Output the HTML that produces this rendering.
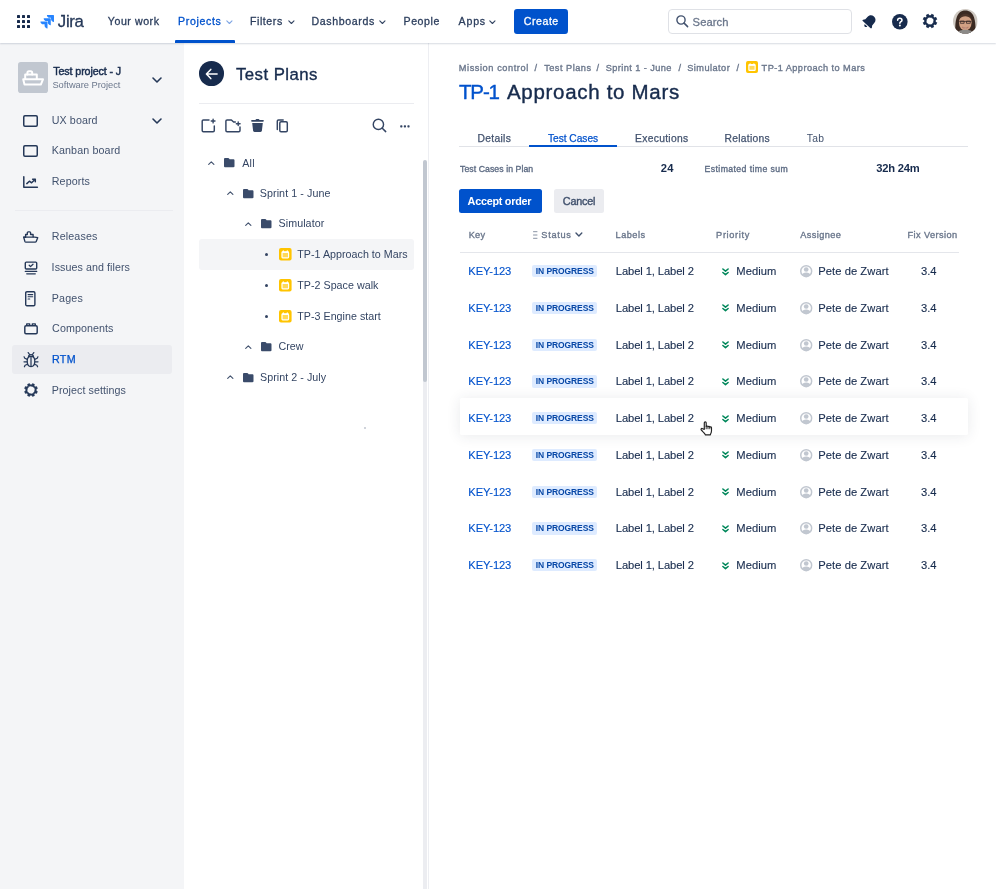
<!DOCTYPE html>
<html lang="en">
<head>
<meta charset="utf-8">
<title>TP-1 Approach to Mars</title>
<style>
*{box-sizing:border-box;margin:0;padding:0}
html,body{width:999px;height:889px;overflow:hidden;background:#fff}
body{font-family:"Liberation Sans",sans-serif;color:#172B4D;position:relative;-webkit-font-smoothing:antialiased}
.a{position:absolute;white-space:nowrap;line-height:1}
svg{position:absolute;overflow:visible}
/* nav */
#nav{left:0;top:0;width:996px;height:43px;background:#fff;box-shadow:0 1px 1.5px rgba(9,30,66,.16);clip-path:inset(0 0 -6px 0);z-index:5}
.m{-webkit-text-stroke:.4px currentColor}
.nv{font-size:10.6px;color:#2C3E5D;top:16.2px;-webkit-text-stroke:.3px currentColor}
/* sidebar */
#side{left:0;top:43px;width:184px;height:846px;background:#F4F5F7}
.sl{font-size:10.7px;color:#42526E;left:52.5px}
/* middle */
.tr{font-size:10.7px;color:#344563}
/* main */
.bc{font-size:9.2px;color:#6B778C;top:63.5px;-webkit-text-stroke:.35px currentColor}
.tab{font-size:10.3px;color:#42526E;top:134.2px;-webkit-text-stroke:.25px currentColor}
.th{font-size:9.2px;color:#6B778C;top:230px;transform:translateY(.6px);-webkit-text-stroke:.35px currentColor}
.row{left:459.5px;width:508.5px;height:37px}
.row .a{top:13px;font-size:11.2px;color:#172B4D;-webkit-text-stroke:.12px currentColor}
.row .key{left:8.8px;color:#0052CC;letter-spacing:-.12px}
.row .loz{left:72.700px;top:12.1px;width:65px;height:12.3px;background:#DEEBFF;border-radius:2px;color:#0747A6;font-size:8.5px;font-weight:bold;-webkit-text-stroke:0;text-align:center;line-height:12.6px;letter-spacing:-.1px;padding-left:.3px}
.row .lab{left:156.3px;letter-spacing:-.1px}
.row .med{left:276.8px;letter-spacing:.05px}
.row .asg{left:358.8px;letter-spacing:.05px}
.row .fix{left:461.5px}
.row svg.pri{left:262.400px;top:14.600px}
.row svg.av{left:340.200px;top:12px}
.hov{left:459.600px;top:398.300px;width:508.600px;height:36.400px;background:#fff;box-shadow:0 1px 14px rgba(40,50,70,.10);border-radius:1.5px}
</style>
</head>
<body>
<div id="wrap" style="position:absolute;left:0;top:0;width:999px;height:889px;will-change:transform">

<!-- ================= NAV ================= -->
<div id="nav" class="a">
  <svg style="left:16.5px;top:15px" width="13" height="13" viewBox="0 0 13 13" fill="#172B4D">
    <rect x="0" y="0" width="3" height="3" rx=".6"/><rect x="5" y="0" width="3" height="3" rx=".6"/><rect x="10" y="0" width="3" height="3" rx=".6"/>
    <rect x="0" y="5" width="3" height="3" rx=".6"/><rect x="5" y="5" width="3" height="3" rx=".6"/><rect x="10" y="5" width="3" height="3" rx=".6"/>
    <rect x="0" y="10" width="3" height="3" rx=".6"/><rect x="5" y="10" width="3" height="3" rx=".6"/><rect x="10" y="10" width="3" height="3" rx=".6"/>
  </svg>
  <svg style="left:40px;top:14px" width="14.5" height="14.5" viewBox="0 0 32 32">
    <path fill="#2684FF" d="M29.6 2H15.2c0 3.6 2.900 6.500 6.500 6.500h2.650v2.550c0 3.600 2.900 6.500 6.500 6.500V3.250C30.850 2.560 30.290 2 29.600 2z"/>
    <path fill="#2684FF" d="M22.480 9.170H8.080c0 3.600 2.900 6.500 6.500 6.500h2.650v2.560c0 3.600 2.910 6.500 6.500 6.500V10.420c0-.690-.560-1.250-1.250-1.250z"/>
    <path fill="#2684FF" d="M15.350 16.340H.95c0 3.600 2.910 6.510 6.500 6.510h2.660v2.550c0 3.590 2.900 6.500 6.490 6.500V17.590c0-.690-.560-1.250-1.250-1.250z"/>
  </svg>
  <div class="a" style="left:57.8px;top:13.5px;font-size:16.8px;color:#253858;-webkit-text-stroke:.3px currentColor;letter-spacing:-0.31px">Jira</div>

  <div class="a nv" style="left:107.8px;;letter-spacing:0.56px">Your work</div>
  <div class="a nv" style="left:178.0px;color:#0052CC;letter-spacing:0.66px">Projects</div>
  <div class="a nv" style="left:250.0px;;letter-spacing:0.56px">Filters</div>
  <div class="a nv" style="left:311.5px;;letter-spacing:0.62px">Dashboards</div>
  <div class="a nv" style="left:403.5px;;letter-spacing:0.56px">People</div>
  <div class="a nv" style="left:458.5px;;letter-spacing:0.84px">Apps</div>
  <svg style="left:225.6px;top:19.8px" width="6.8" height="4.4" viewBox="0 0 6.8 4.4"><path d="M.8.9l2.600 2.600L6 .9" fill="none" stroke="#7FA6E4" stroke-width="1.1" stroke-linecap="round" stroke-linejoin="round"/></svg>
  <svg style="left:287.6px;top:19.8px" width="6.8" height="4.4" viewBox="0 0 6.8 4.4"><path d="M.8.9l2.600 2.600L6 .9" fill="none" stroke="#344563" stroke-width="1.1" stroke-linecap="round" stroke-linejoin="round"/></svg>
  <svg style="left:378.6px;top:19.8px" width="6.8" height="4.4" viewBox="0 0 6.8 4.4"><path d="M.8.9l2.600 2.600L6 .9" fill="none" stroke="#344563" stroke-width="1.1" stroke-linecap="round" stroke-linejoin="round"/></svg>
  <svg style="left:489.1px;top:19.8px" width="6.8" height="4.4" viewBox="0 0 6.8 4.4"><path d="M.8.9l2.600 2.600L6 .9" fill="none" stroke="#344563" stroke-width="1.1" stroke-linecap="round" stroke-linejoin="round"/></svg>
  <div class="a" style="left:175.300px;top:40.300px;width:59.700px;height:2.700px;background:#0052CC;border-radius:1px 1px 0 0"></div>

  <div class="a" style="left:514px;top:9px;width:53.500px;height:25px;background:#0052CC;border-radius:3px"></div>
  <div class="a nv" style="left:523.8px;color:#fff;letter-spacing:0.53px">Create</div>

  <div class="a" style="left:668px;top:9px;width:184px;height:25px;border:1.5px solid #DFE1E6;border-radius:4px;background:#fff"></div>
  <svg style="left:676px;top:15.300px" width="12.500" height="12.500" viewBox="0 0 12.500 12.500"><circle cx="5" cy="5" r="4.100" fill="none" stroke="#42526E" stroke-width="1.400"/><path d="M8.100 8.100l3.500 3.500" stroke="#42526E" stroke-width="1.500" stroke-linecap="round"/></svg>
  <div class="a" style="left:692.6px;top:17.2px;font-size:11.200px;color:#6B778C;-webkit-text-stroke:.3px currentColor;letter-spacing:0.07px">Search</div>

  <!-- bell -->
  <svg style="left:861.500px;top:13.800px" width="15" height="15" viewBox="0 0 16 16"><g transform="rotate(42 8 8)" fill="#172B4D"><path d="M8 .9c-2.900 0-4.900 2.100-4.900 5v3.300L1.700 11.200c-.4.600 0 1.300.7 1.300h11.200c.7 0 1.100-.7.700-1.300l-1.400-2V5.900c0-2.900-2-5-4.900-5z"/><path d="M6.200 13.500h3.600c0 1.100-.8 1.900-1.800 1.900s-1.800-.8-1.800-1.900z"/></g></svg>
  <!-- help -->
  <svg style="left:891.600px;top:13.600px" width="15.600" height="15.600" viewBox="0 0 18 18"><circle cx="9" cy="9" r="9" fill="#172B4D"/><path d="M6.500 7.300c0-1.500 1.100-2.500 2.500-2.500s2.500.9 2.500 2.300c0 1.800-2.400 1.800-2.400 3.600" fill="none" stroke="#fff" stroke-width="1.800" stroke-linecap="round"/><circle cx="9.100" cy="13.300" r="1.150" fill="#fff"/></svg>
  <!-- gear -->
  <svg style="left:921.800px;top:13.400px" width="16" height="16" viewBox="0 0 16 16"><path fill="#172B4D" fill-rule="evenodd" stroke="#172B4D" stroke-width=".6" stroke-linejoin="round" d="M13.35 6.72 L14.91 6.90 L14.91 9.10 L13.35 9.28 L12.69 10.87 L13.66 12.11 L12.11 13.66 L10.87 12.69 L9.28 13.35 L9.10 14.91 L6.90 14.91 L6.72 13.35 L5.13 12.69 L3.89 13.66 L2.34 12.11 L3.31 10.87 L2.65 9.28 L1.09 9.10 L1.09 6.90 L2.65 6.72 L3.31 5.13 L2.34 3.89 L3.89 2.34 L5.13 3.31 L6.72 2.65 L6.90 1.09 L9.10 1.09 L9.28 2.65 L10.87 3.31 L12.11 2.34 L13.66 3.89 L12.69 5.13Z M11.70 8.00 A3.7 3.7 0 1 0 4.30 8.00 A3.7 3.7 0 1 0 11.70 8.00Z" transform="rotate(22.5 8 8)"/></svg>
  <!-- avatar -->
  <svg style="left:952.900px;top:9px" width="24.600" height="24.600" viewBox="0 0 24.600 24.600"><defs><clipPath id="avc"><circle cx="12.300" cy="12.300" r="12.300"/></clipPath></defs><g clip-path="url(#avc)"><rect width="24.600" height="24.600" fill="#CFC9C2"/><path d="M2.500 25C1.500 12 3.500 1.500 12.300 1.500S23 11 22.500 25z" fill="#3B2A22"/><ellipse cx="12.300" cy="13.600" rx="6.300" ry="8" fill="#D2A184"/><path d="M5.800 10.500c1-4.500 4-5.800 6.500-5.800s5.600 1.400 6.500 5.800c-2-2.600-4.500-3.300-6.500-3.300s-4.500.7-6.500 3.300z" fill="#4A3328"/><path d="M6.300 12.400h12M7.300 12.100h3.800v2.200H7.300zM13.500 12.100h3.800v2.200h-3.800z" fill="none" stroke="#3A2C2A" stroke-width=".8"/><path d="M9.300 18.300c1.800 1.500 4.200 1.500 6 0-1.800.5-4.200.5-6 0z" fill="#fff" stroke="#A0604C" stroke-width=".5"/><path d="M4 25c1-3.500 4.500-4.200 8.300-4.200s7.300.7 8.300 4.200z" fill="#8C8A88"/></g></svg>
</div>

<!-- ================= SIDEBAR ================= -->
<div id="side" class="a"></div>
<div id="sidec">
  <!-- project header -->
  <div class="a" style="left:17.800px;top:62.100px;width:30.200px;height:30.800px;border-radius:2.800px;background:#C1C7D0"></div>
  <svg style="left:18px;top:62px" width="30" height="31" viewBox="0 0 30 31" fill="none" stroke="#fff" stroke-width="2" stroke-linejoin="round" stroke-linecap="round">
    <path d="M5.200 17.300h19.800l-2.200 5.300H6.500z"/><path d="M7.200 17V12.600h11.600V17"/><path d="M9.400 12.400v-1.600c0-.9.600-1.500 1.500-1.500h1.800c.9 0 1.500.6 1.500 1.500v1.600"/>
  </svg>
  <div class="a" style="left:53.3px;top:66px;font-size:10.7px;color:#172B4D;-webkit-text-stroke:.45px currentColor;letter-spacing:-0.11px">Test project - J</div>
  <div class="a" style="left:52.4px;top:80.500px;font-size:9.300px;color:#6B778C;letter-spacing:-0.01px">Software Project</div>
  <svg style="left:151.500px;top:76.500px" width="10" height="6" viewBox="0 0 10 6"><path d="M1 1l4 4 4-4" fill="none" stroke="#253858" stroke-width="1.600" stroke-linecap="round" stroke-linejoin="round"/></svg>

  <!-- UX board -->
  <svg style="left:23px;top:114.500px" width="15" height="12" viewBox="0 0 15 12"><rect x=".75" y=".75" width="13.500" height="10.500" rx="1.200" fill="none" stroke="#253858" stroke-width="1.500"/></svg>
  <div class="a sl" style="left:51.8px;top:114.500px;letter-spacing:0.08px">UX board</div>
  <svg style="left:151.500px;top:117.500px" width="10" height="6" viewBox="0 0 10 6"><path d="M1 1l4 4 4-4" fill="none" stroke="#253858" stroke-width="1.600" stroke-linecap="round" stroke-linejoin="round"/></svg>
  <!-- Kanban -->
  <svg style="left:23px;top:145px" width="15" height="12" viewBox="0 0 15 12"><rect x=".75" y=".75" width="13.500" height="10.500" rx="1.200" fill="none" stroke="#253858" stroke-width="1.500"/></svg>
  <div class="a sl" style="left:51.7px;top:145px;letter-spacing:0.13px">Kanban board</div>
  <!-- Reports -->
  <svg style="left:23px;top:175.500px" width="15" height="12" viewBox="0 0 15 12" fill="none" stroke="#253858" stroke-width="1.500" stroke-linecap="round" stroke-linejoin="round"><path d="M.8.800v10.400h13.600"/><path d="M3.800 7.600l2.600-2.400 2.200 1.600 3.400-3.300"/><path d="M9.600 3.200h2.700v2.600"/></svg>
  <div class="a sl" style="left:51.8px;top:175.500px;letter-spacing:0.1px">Reports</div>

  <div class="a" style="left:15px;top:209.500px;width:158px;height:1.500px;background:#EBECF0"></div>

  <!-- Releases -->
  <svg style="left:23px;top:231px" width="16" height="12" viewBox="0 0 16 12" fill="none" stroke="#253858" stroke-width="1.350" stroke-linejoin="round" stroke-linecap="round"><path d="M.7 6.200h1.900V3.500h1.700V1.800c0-.6.300-.9.900-.9h1.500c.6 0 .9.300.9.900v1.700h2.500v2.300l4.600.9-1.500 3.700c-.2.500-.5.700-1 .7H2.900c-.5 0-.8-.2-1-.7z"/><path d="M.7 6.200h9.600" stroke-width="1.200"/></svg>
  <div class="a sl" style="left:51.8px;top:231px;letter-spacing:0.14px">Releases</div>
  <!-- Issues -->
  <svg style="left:23.500px;top:260.500px" width="14" height="14" viewBox="0 0 14 14" fill="none" stroke="#253858" stroke-width="1.400" stroke-linecap="round" stroke-linejoin="round"><rect x="1.300" y="1.100" width="11.400" height="6.900" rx="1"/><path d="M5.200 4.300l1.300 1.300 2.500-2.400" stroke-width="1.300"/><path d="M1.300 10.400h11.400M2.700 12.800h8.600" stroke-width="1.250"/></svg>
  <div class="a sl" style="left:51.6px;top:262px;letter-spacing:0.07px">Issues and filers</div>
  <!-- Pages -->
  <svg style="left:25.300px;top:290.600px" width="10.600" height="15.400" viewBox="0 0 10.600 15.400" fill="none" stroke="#253858" stroke-width="1.400" stroke-linecap="round" stroke-linejoin="round"><rect x=".7" y=".7" width="9.200" height="14" rx="1.200"/><path d="M3.100 3.600h4.600M3.100 5.800h4.600M3.100 8h1.600" stroke-width="1.150"/></svg>
  <div class="a sl" style="left:51.8px;top:292.500px;letter-spacing:0.18px">Pages</div>
  <!-- Components -->
  <svg style="left:23.500px;top:323.300px" width="14" height="11.600" viewBox="0 0 14 11.600" fill="none" stroke="#253858" stroke-width="1.450" stroke-linejoin="round"><rect x=".8" y="2.700" width="12.400" height="8.100" rx="1.200"/><path d="M2.700 2.500V.9h3v1.600M8.300 2.500V.9h3v1.600" stroke-width="1.350"/></svg>
  <div class="a sl" style="left:52.1px;top:323px;letter-spacing:0.08px">Components</div>
  <!-- RTM -->
  <div class="a" style="left:12.300px;top:345px;width:159.300px;height:29px;border-radius:3px;background:#EBECF0"></div>
  <svg style="left:23px;top:351.500px" width="16" height="16" viewBox="0 0 16 16" fill="none" stroke="#253858" stroke-width="1.250" stroke-linecap="round" stroke-linejoin="round"><path d="M8 4.400c2.400 0 3.800 1.700 3.800 4.800s-1.400 5.300-3.800 5.300-3.800-2.200-3.800-5.300S5.600 4.400 8 4.400z"/><path d="M5.500 4.700C5.600 3.300 6.600 2.500 8 2.500s2.400.8 2.500 2.200"/><path d="M8 4.800v9.400"/><path d="M6.600 2.500L5.200.6M9.400 2.500L10.800.6"/><path d="M4.300 7.400L1.800 6.200l-.7-1.400M4.100 9.800H1M4.500 12.200l-2.400 1.100-.7 1.500M11.700 7.400l2.500-1.200.7-1.400M11.900 9.800H15M11.500 12.200l2.400 1.100.7 1.500"/></svg>
  <div class="a sl" style="left:52px;top:354px;color:#0052CC;-webkit-text-stroke:.25px currentColor;letter-spacing:0.3px">RTM</div>
  <!-- Settings -->
  <svg style="left:22.500px;top:382px" width="16" height="16" viewBox="0 0 16 16"><path fill="#253858" fill-rule="evenodd" stroke="#253858" stroke-width=".5" stroke-linejoin="round" d="M13.15 6.76 L14.52 6.97 L14.52 9.03 L13.15 9.24 L12.52 10.77 L13.34 11.88 L11.88 13.34 L10.77 12.52 L9.24 13.15 L9.03 14.52 L6.97 14.52 L6.76 13.15 L5.23 12.52 L4.12 13.34 L2.66 11.88 L3.48 10.77 L2.85 9.24 L1.48 9.03 L1.48 6.97 L2.85 6.76 L3.48 5.23 L2.66 4.12 L4.12 2.66 L5.23 3.48 L6.76 2.85 L6.97 1.48 L9.03 1.48 L9.24 2.85 L10.77 3.48 L11.88 2.66 L13.34 4.12 L12.52 5.23Z M11.80 8.00 A3.8 3.8 0 1 0 4.20 8.00 A3.8 3.8 0 1 0 11.80 8.00Z" transform="rotate(22.5 8 8)"/></svg>
  <div class="a sl" style="left:51.8px;top:384.500px;letter-spacing:0.06px">Project settings</div>
</div>

<!-- ================= MIDDLE ================= -->
<div id="mid">
  <div class="a" style="left:428px;top:43px;width:1.400px;height:846px;background:#EDEEF2"></div>
  <div class="a" style="left:422.900px;top:378px;width:4.400px;height:511px;background:#ECEDF1"></div>
  <div class="a" style="left:422.900px;top:160px;width:4.400px;height:221.700px;background:#C1C7D0;border-radius:2.200px"></div>
  <div class="a" style="left:199px;top:61.200px;width:24.600px;height:24.600px;border-radius:50%;background:#172B4D"></div>
  <svg style="left:205px;top:67.500px" width="13" height="12" viewBox="0 0 13 12"><path d="M5.800 1.400L1.400 6l4.400 4.600M1.800 6h10.300" fill="none" stroke="#fff" stroke-width="1.500" stroke-linecap="round" stroke-linejoin="round"/></svg>
  <div class="a" style="left:236px;top:67px;font-size:16.800px;color:#172B4D;-webkit-text-stroke:.35px #172B4D;letter-spacing:0.44px">Test Plans</div>
  <div class="a" style="left:199px;top:102.700px;width:214.500px;height:1.200px;background:#EBECF0"></div>
  <!-- toolbar -->
  <svg style="left:195px;top:110px" width="105" height="30" viewBox="195 110 105 30" fill="none" stroke="#344563" stroke-width="1.450" stroke-linecap="round" stroke-linejoin="round">
    <path d="M209 119.900h-5.600c-.7 0-1.200.5-1.200 1.200v9.400c0 .7.500 1.200 1.200 1.200h9.700c.7 0 1.200-.5 1.200-1.200V126"/><path d="M213.100 119.100v3.800M211.200 121h3.800" stroke-width="1.350"/>
    <path d="M235.300 122h-1.700l-2.200-2.100h-4.300c-.7 0-1.200.5-1.200 1.200v9.400c0 .7.500 1.200 1.200 1.200h11.700c.7 0 1.200-.5 1.200-1.200v-3.600"/><path d="M238.200 121.800v3.800M236.300 123.700h3.800" stroke-width="1.350"/>
    <path fill="#344563" stroke="none" d="M255.500 119.900c.1-.5.500-.8 1-.8h2c.5 0 .9.300 1 .8h3.500c.5 0 .9.400.9.900s-.4.900-.9.900h-11c-.5 0-.9-.4-.9-.9s.4-.9.900-.9zM252.200 123h10.600l-.9 7.700c-.1.700-.7 1.200-1.400 1.200h-6c-.7 0-1.300-.5-1.400-1.200z"/>
    <rect x="279.800" y="121.800" width="7.500" height="10" rx="1.200"/><path d="M277.300 129.600v-8.500c0-.7.500-1.200 1.200-1.200h4.700"/>
  </svg>
  <svg style="left:372.400px;top:118.200px" width="15.500" height="15.500" viewBox="0 0 15.500 15.500"><circle cx="6.400" cy="6.400" r="5.150" fill="none" stroke="#344563" stroke-width="1.450"/><path d="M10.300 10.300l3.400 3.300" stroke="#344563" stroke-width="1.500" stroke-linecap="round"/></svg>
  <svg style="left:399.600px;top:124.800px" width="10" height="2.600" viewBox="0 0 10 2.600" fill="#344563"><rect x=".2" y=".2" width="2.200" height="2.200" rx=".7"/><rect x="3.800" y=".2" width="2.200" height="2.200" rx=".7"/><rect x="7.400" y=".2" width="2.200" height="2.200" rx=".7"/></svg>
  <div class="a" style="left:199px;top:239.300px;width:215px;height:30.400px;border-radius:3px;background:#F4F5F7"></div>
  <svg style="left:208.1px;top:160.8px" width="6.600" height="4" viewBox="0 0 6.600 4"><path d="M.7 3.300L3.300.8l2.600 2.500" fill="none" stroke="#42526E" stroke-width="1.150" stroke-linecap="round" stroke-linejoin="round"/></svg><svg style="left:224.4px;top:158.1px" width="10.500" height="9.200" viewBox="0 0 10.500 9.200"><path fill="#3A4B6A" d="M.9 0h3.300c.4 0 .7.200.9.500l.5.800h4c.5 0 .9.400.9.900v6.100c0 .5-.4.900-.9.900H.9C.4 9.200 0 8.800 0 8.300V.9C0 .4.400 0 .9 0z"/></svg><div class="a tr" style="left:242.3px;top:158px;letter-spacing:0.19px">All</div>
  <svg style="left:226.6px;top:191.2px" width="6.600" height="4" viewBox="0 0 6.600 4"><path d="M.7 3.300L3.300.8l2.600 2.500" fill="none" stroke="#42526E" stroke-width="1.150" stroke-linecap="round" stroke-linejoin="round"/></svg><svg style="left:242.9px;top:188.5px" width="10.500" height="9.200" viewBox="0 0 10.500 9.200"><path fill="#3A4B6A" d="M.9 0h3.300c.4 0 .7.200.9.500l.5.800h4c.5 0 .9.400.9.900v6.100c0 .5-.4.900-.9.900H.9C.4 9.200 0 8.800 0 8.300V.9C0 .4.400 0 .9 0z"/></svg><div class="a tr" style="left:259.8px;top:188px;letter-spacing:0.08px">Sprint 1 - June</div>
  <svg style="left:244.9px;top:221.8px" width="6.600" height="4" viewBox="0 0 6.600 4"><path d="M.7 3.300L3.300.8l2.600 2.500" fill="none" stroke="#42526E" stroke-width="1.150" stroke-linecap="round" stroke-linejoin="round"/></svg><svg style="left:261.2px;top:219.1px" width="10.500" height="9.200" viewBox="0 0 10.500 9.200"><path fill="#3A4B6A" d="M.9 0h3.300c.4 0 .7.200.9.500l.5.800h4c.5 0 .9.400.9.900v6.100c0 .5-.4.900-.9.900H.9C.4 9.200 0 8.800 0 8.300V.9C0 .4.400 0 .9 0z"/></svg><div class="a tr" style="left:278.5px;top:218px;letter-spacing:0.08px">Simulator</div>
  <div class="a" style="left:265.0px;top:253.2px;width:3px;height:3px;border-radius:50%;background:#344563"></div><svg style="left:278.6px;top:248.3px" width="12.600" height="12.600" viewBox="0 0 12.600 12.600"><rect width="12.600" height="12.600" rx="2" fill="#FFC400"/><rect x="3" y="4.300" width="6.600" height="5.500" rx=".7" fill="#FFD95A" stroke="#fff" stroke-width="1.200"/><path d="M2.600 4.600V4c0-.5.300-.8.800-.8h5.800c.5 0 .8.300.8.800v.6z" fill="#fff"/><path d="M4.300 2.900v1M8.300 2.900v1" stroke="#fff" stroke-width="1.300" stroke-linecap="round"/></svg><div class="a tr" style="left:297.2px;top:249px;letter-spacing:0.03px">TP-1 Approach to Mars</div>
  <div class="a" style="left:265.0px;top:283.9px;width:3px;height:3px;border-radius:50%;background:#344563"></div><svg style="left:278.6px;top:279.0px" width="12.600" height="12.600" viewBox="0 0 12.600 12.600"><rect width="12.600" height="12.600" rx="2" fill="#FFC400"/><rect x="3" y="4.300" width="6.600" height="5.500" rx=".7" fill="#FFD95A" stroke="#fff" stroke-width="1.200"/><path d="M2.600 4.600V4c0-.5.300-.8.800-.8h5.800c.5 0 .8.300.8.800v.6z" fill="#fff"/><path d="M4.300 2.900v1M8.300 2.900v1" stroke="#fff" stroke-width="1.300" stroke-linecap="round"/></svg><div class="a tr" style="left:297.2px;top:280px;letter-spacing:0.03px">TP-2 Space walk</div>
  <div class="a" style="left:265.0px;top:314.7px;width:3px;height:3px;border-radius:50%;background:#344563"></div><svg style="left:278.6px;top:309.8px" width="12.600" height="12.600" viewBox="0 0 12.600 12.600"><rect width="12.600" height="12.600" rx="2" fill="#FFC400"/><rect x="3" y="4.300" width="6.600" height="5.500" rx=".7" fill="#FFD95A" stroke="#fff" stroke-width="1.200"/><path d="M2.600 4.600V4c0-.5.300-.8.800-.8h5.800c.5 0 .8.300.8.800v.6z" fill="#fff"/><path d="M4.300 2.900v1M8.300 2.900v1" stroke="#fff" stroke-width="1.300" stroke-linecap="round"/></svg><div class="a tr" style="left:297.2px;top:311px;letter-spacing:0.03px">TP-3 Engine start</div>
  <svg style="left:245.1px;top:344.6px" width="6.600" height="4" viewBox="0 0 6.600 4"><path d="M.7 3.300L3.300.8l2.600 2.500" fill="none" stroke="#42526E" stroke-width="1.150" stroke-linecap="round" stroke-linejoin="round"/></svg><svg style="left:261.4px;top:341.9px" width="10.500" height="9.200" viewBox="0 0 10.500 9.200"><path fill="#3A4B6A" d="M.9 0h3.300c.4 0 .7.200.9.500l.5.800h4c.5 0 .9.400.9.900v6.100c0 .5-.4.900-.9.900H.9C.4 9.200 0 8.800 0 8.300V.9C0 .4.400 0 .9 0z"/></svg><div class="a tr" style="left:278.4px;top:341px;letter-spacing:0.04px">Crew</div>
  <svg style="left:226.7px;top:375.2px" width="6.600" height="4" viewBox="0 0 6.600 4"><path d="M.7 3.300L3.300.8l2.600 2.500" fill="none" stroke="#42526E" stroke-width="1.150" stroke-linecap="round" stroke-linejoin="round"/></svg><svg style="left:243.0px;top:372.5px" width="10.500" height="9.200" viewBox="0 0 10.500 9.200"><path fill="#3A4B6A" d="M.9 0h3.300c.4 0 .7.200.9.500l.5.800h4c.5 0 .9.400.9.900v6.100c0 .5-.4.900-.9.900H.9C.4 9.200 0 8.800 0 8.300V.9C0 .4.400 0 .9 0z"/></svg><div class="a tr" style="left:260.0px;top:372px;letter-spacing:0.05px">Sprint 2 - July</div>
</div>

<!-- ================= MAIN ================= -->
<div id="main">
  <div class="a bc" style="left:458.8px;;letter-spacing:0.58px">Mission control</div><div class="a bc" style="left:534.500px">/</div>
  <div class="a bc" style="left:544.2px;;letter-spacing:0.49px">Test Plans</div><div class="a bc" style="left:596.500px">/</div>
  <div class="a bc" style="left:605.7px;;letter-spacing:0.43px">Sprint 1 - June</div><div class="a bc" style="left:678.500px">/</div>
  <div class="a bc" style="left:687.3px;;letter-spacing:0.45px">Simulator</div><div class="a bc" style="left:736.500px">/</div>
  <svg style="left:746px;top:61px" width="12" height="12" viewBox="0 0 12.600 12.600"><rect width="12.600" height="12.600" rx="2" fill="#FFC400"/><rect x="3" y="4.300" width="6.600" height="5.500" rx=".7" fill="#FFD95A" stroke="#fff" stroke-width="1.200"/><path d="M2.600 4.600V4c0-.5.300-.8.800-.8h5.800c.5 0 .8.300.8.800v.6z" fill="#fff"/><path d="M4.300 2.900v1M8.300 2.900v1" stroke="#fff" stroke-width="1.300" stroke-linecap="round"/></svg>
  <div class="a bc" style="left:761.6px;;letter-spacing:0.44px">TP-1 Approach to Mars</div>
  <div class="a m" style="left:459px;top:82px;font-size:20.500px;color:#0052CC;letter-spacing:-1.16px">TP-1</div>
  <div class="a m" style="left:507px;top:82px;font-size:20.500px;color:#172B4D;letter-spacing:0.69px">Approach to Mars</div>
  <!-- tabs -->
  <div class="a tab" style="left:477.5px;;letter-spacing:0.3px">Details</div>
  <div class="a tab" style="left:548px;top:133.7px;font-size:10.2px;color:#0052CC;letter-spacing:-0.03px">Test Cases</div>
  <div class="a tab" style="left:635.1px;;letter-spacing:0.3px">Executions</div>
  <div class="a tab" style="left:724.5px;;letter-spacing:0.29px">Relations</div>
  <div class="a tab" style="left:806.8px;-webkit-text-stroke:0;letter-spacing:0.23px">Tab</div>
  <div class="a" style="left:459px;top:145.900px;width:509px;height:1px;background:#E1E3E8"></div>
  <div class="a" style="left:529px;top:145.300px;width:87.600px;height:1.700px;background:#0052CC"></div>
  <!-- stats -->
  <div class="a" style="left:460.0px;top:165.2px;font-size:8.700px;-webkit-text-stroke:.35px currentColor;color:#5E6C84;letter-spacing:0.07px">Test Cases in Plan</div>
  <div class="a" style="left:660.8px;top:163px;font-size:11.200px;font-weight:bold;color:#172B4D;letter-spacing:0.11px">24</div>
  <div class="a" style="left:704.6px;top:165.2px;font-size:8.700px;-webkit-text-stroke:.35px currentColor;color:#5E6C84;letter-spacing:0.4px">Estimated time sum</div>
  <div class="a" style="left:876.2px;top:163px;font-size:11.200px;font-weight:bold;color:#172B4D;letter-spacing:-0.2px">32h 24m</div>
  <!-- buttons -->
  <div class="a" style="left:459px;top:188.800px;width:82.600px;height:24px;background:#0052CC;border-radius:2.500px"></div>
  <div class="a" style="left:467.6px;top:195.500px;font-size:10.800px;font-weight:bold;color:#fff;letter-spacing:-0.25px">Accept order</div>
  <div class="a" style="left:554px;top:188.800px;width:50.300px;height:24px;background:#EBECF0;border-radius:2.500px"></div>
  <div class="a" style="left:562.8px;top:195.500px;font-size:10.800px;color:#42526E;-webkit-text-stroke:.4px currentColor;letter-spacing:-0.21px">Cancel</div>
  <!-- table head -->
  <div class="a th" style="left:468.7px;;letter-spacing:0.23px">Key</div>
  <svg style="left:533px;top:230.500px" width="4.500" height="8" viewBox="0 0 4.500 8" stroke="#8993A4" stroke-width="1" stroke-linecap="round"><path d="M.5.700h3.500M.5 4h3.500M.5 7.300h3.500"/></svg>
  <div class="a th" style="left:541.3px;;letter-spacing:0.72px">Status</div>
  <svg style="left:575.300px;top:232.400px" width="7.800" height="5" viewBox="0 0 7.800 5"><path d="M1 1l2.900 2.900L6.800 1" fill="none" stroke="#42526E" stroke-width="1.400" stroke-linecap="round" stroke-linejoin="round"/></svg>
  <div class="a th" style="left:615.6px;;letter-spacing:0.47px">Labels</div>
  <div class="a th" style="left:716.1px;;letter-spacing:0.67px">Priority</div>
  <div class="a th" style="left:800.3px;;letter-spacing:0.38px">Assignee</div>
  <div class="a th" style="left:907.6px;;letter-spacing:0.41px">Fix Version</div>
  <div class="a" style="left:459.500px;top:251.700px;width:499.500px;height:1.500px;background:#E4E6EB"></div>
  <div class="a hov"></div>
  <div class="a row" style="top:253.0px"><div class="a key">KEY-123</div><div class="a loz">IN PROGRESS</div><div class="a lab">Label 1, Label 2</div><svg class="pri" width="7" height="7.900" viewBox="0 0 8 9" fill="none" stroke="#00875A" stroke-width="1.750" stroke-linecap="round" stroke-linejoin="round"><path d="M1 1.100l3 2.500 3-2.500M1 5.100l3 2.500 3-2.500"/></svg><div class="a med">Medium</div><svg class="av" width="12.400" height="12.400" viewBox="0 0 12.400 12.400"><circle cx="6.200" cy="6.200" r="5.450" fill="#fff" stroke="#C1C7D0" stroke-width="1.500"/><circle cx="6.200" cy="4.500" r="2.350" fill="#C1C7D0"/><path d="M1.900 10c.4-1.800 1.900-2.600 4.300-2.600s3.900.8 4.300 2.600c-1.100 1.100-2.600 1.700-4.300 1.700s-3.200-.6-4.300-1.700z" fill="#C1C7D0"/></svg><div class="a asg">Pete de Zwart</div><div class="a fix">3.4</div></div>
  <div class="a row" style="top:289.75px"><div class="a key">KEY-123</div><div class="a loz">IN PROGRESS</div><div class="a lab">Label 1, Label 2</div><svg class="pri" width="7" height="7.900" viewBox="0 0 8 9" fill="none" stroke="#00875A" stroke-width="1.750" stroke-linecap="round" stroke-linejoin="round"><path d="M1 1.100l3 2.500 3-2.500M1 5.100l3 2.500 3-2.500"/></svg><div class="a med">Medium</div><svg class="av" width="12.400" height="12.400" viewBox="0 0 12.400 12.400"><circle cx="6.200" cy="6.200" r="5.450" fill="#fff" stroke="#C1C7D0" stroke-width="1.500"/><circle cx="6.200" cy="4.500" r="2.350" fill="#C1C7D0"/><path d="M1.900 10c.4-1.800 1.900-2.600 4.300-2.600s3.900.8 4.300 2.600c-1.100 1.100-2.600 1.700-4.300 1.700s-3.200-.6-4.300-1.700z" fill="#C1C7D0"/></svg><div class="a asg">Pete de Zwart</div><div class="a fix">3.4</div></div>
  <div class="a row" style="top:326.5px"><div class="a key">KEY-123</div><div class="a loz">IN PROGRESS</div><div class="a lab">Label 1, Label 2</div><svg class="pri" width="7" height="7.900" viewBox="0 0 8 9" fill="none" stroke="#00875A" stroke-width="1.750" stroke-linecap="round" stroke-linejoin="round"><path d="M1 1.100l3 2.500 3-2.500M1 5.100l3 2.500 3-2.500"/></svg><div class="a med">Medium</div><svg class="av" width="12.400" height="12.400" viewBox="0 0 12.400 12.400"><circle cx="6.200" cy="6.200" r="5.450" fill="#fff" stroke="#C1C7D0" stroke-width="1.500"/><circle cx="6.200" cy="4.500" r="2.350" fill="#C1C7D0"/><path d="M1.900 10c.4-1.800 1.900-2.600 4.300-2.600s3.900.8 4.300 2.600c-1.100 1.100-2.600 1.700-4.300 1.700s-3.200-.6-4.300-1.700z" fill="#C1C7D0"/></svg><div class="a asg">Pete de Zwart</div><div class="a fix">3.4</div></div>
  <div class="a row" style="top:363.25px"><div class="a key">KEY-123</div><div class="a loz">IN PROGRESS</div><div class="a lab">Label 1, Label 2</div><svg class="pri" width="7" height="7.900" viewBox="0 0 8 9" fill="none" stroke="#00875A" stroke-width="1.750" stroke-linecap="round" stroke-linejoin="round"><path d="M1 1.100l3 2.500 3-2.500M1 5.100l3 2.500 3-2.500"/></svg><div class="a med">Medium</div><svg class="av" width="12.400" height="12.400" viewBox="0 0 12.400 12.400"><circle cx="6.200" cy="6.200" r="5.450" fill="#fff" stroke="#C1C7D0" stroke-width="1.500"/><circle cx="6.200" cy="4.500" r="2.350" fill="#C1C7D0"/><path d="M1.900 10c.4-1.800 1.900-2.600 4.300-2.600s3.900.8 4.300 2.600c-1.100 1.100-2.600 1.700-4.300 1.700s-3.200-.6-4.300-1.700z" fill="#C1C7D0"/></svg><div class="a asg">Pete de Zwart</div><div class="a fix">3.4</div></div>
  <div class="a row" style="top:400.0px"><div class="a key">KEY-123</div><div class="a loz">IN PROGRESS</div><div class="a lab">Label 1, Label 2</div><svg class="pri" width="7" height="7.900" viewBox="0 0 8 9" fill="none" stroke="#00875A" stroke-width="1.750" stroke-linecap="round" stroke-linejoin="round"><path d="M1 1.100l3 2.500 3-2.500M1 5.100l3 2.500 3-2.500"/></svg><div class="a med">Medium</div><svg class="av" width="12.400" height="12.400" viewBox="0 0 12.400 12.400"><circle cx="6.200" cy="6.200" r="5.450" fill="#fff" stroke="#C1C7D0" stroke-width="1.500"/><circle cx="6.200" cy="4.500" r="2.350" fill="#C1C7D0"/><path d="M1.900 10c.4-1.800 1.900-2.600 4.300-2.600s3.900.8 4.300 2.600c-1.100 1.100-2.600 1.700-4.300 1.700s-3.200-.6-4.300-1.700z" fill="#C1C7D0"/></svg><div class="a asg">Pete de Zwart</div><div class="a fix">3.4</div></div>
  <div class="a row" style="top:436.75px"><div class="a key">KEY-123</div><div class="a loz">IN PROGRESS</div><div class="a lab">Label 1, Label 2</div><svg class="pri" width="7" height="7.900" viewBox="0 0 8 9" fill="none" stroke="#00875A" stroke-width="1.750" stroke-linecap="round" stroke-linejoin="round"><path d="M1 1.100l3 2.500 3-2.500M1 5.100l3 2.500 3-2.500"/></svg><div class="a med">Medium</div><svg class="av" width="12.400" height="12.400" viewBox="0 0 12.400 12.400"><circle cx="6.200" cy="6.200" r="5.450" fill="#fff" stroke="#C1C7D0" stroke-width="1.500"/><circle cx="6.200" cy="4.500" r="2.350" fill="#C1C7D0"/><path d="M1.900 10c.4-1.800 1.900-2.600 4.300-2.600s3.900.8 4.300 2.600c-1.100 1.100-2.600 1.700-4.300 1.700s-3.200-.6-4.300-1.700z" fill="#C1C7D0"/></svg><div class="a asg">Pete de Zwart</div><div class="a fix">3.4</div></div>
  <div class="a row" style="top:473.5px"><div class="a key">KEY-123</div><div class="a loz">IN PROGRESS</div><div class="a lab">Label 1, Label 2</div><svg class="pri" width="7" height="7.900" viewBox="0 0 8 9" fill="none" stroke="#00875A" stroke-width="1.750" stroke-linecap="round" stroke-linejoin="round"><path d="M1 1.100l3 2.500 3-2.500M1 5.100l3 2.500 3-2.500"/></svg><div class="a med">Medium</div><svg class="av" width="12.400" height="12.400" viewBox="0 0 12.400 12.400"><circle cx="6.200" cy="6.200" r="5.450" fill="#fff" stroke="#C1C7D0" stroke-width="1.500"/><circle cx="6.200" cy="4.500" r="2.350" fill="#C1C7D0"/><path d="M1.900 10c.4-1.800 1.900-2.600 4.300-2.600s3.900.8 4.300 2.600c-1.100 1.100-2.600 1.700-4.300 1.700s-3.200-.6-4.300-1.700z" fill="#C1C7D0"/></svg><div class="a asg">Pete de Zwart</div><div class="a fix">3.4</div></div>
  <div class="a row" style="top:510.25px"><div class="a key">KEY-123</div><div class="a loz">IN PROGRESS</div><div class="a lab">Label 1, Label 2</div><svg class="pri" width="7" height="7.900" viewBox="0 0 8 9" fill="none" stroke="#00875A" stroke-width="1.750" stroke-linecap="round" stroke-linejoin="round"><path d="M1 1.100l3 2.500 3-2.500M1 5.100l3 2.500 3-2.500"/></svg><div class="a med">Medium</div><svg class="av" width="12.400" height="12.400" viewBox="0 0 12.400 12.400"><circle cx="6.200" cy="6.200" r="5.450" fill="#fff" stroke="#C1C7D0" stroke-width="1.500"/><circle cx="6.200" cy="4.500" r="2.350" fill="#C1C7D0"/><path d="M1.900 10c.4-1.800 1.900-2.600 4.300-2.600s3.900.8 4.300 2.600c-1.100 1.100-2.600 1.700-4.300 1.700s-3.200-.6-4.300-1.700z" fill="#C1C7D0"/></svg><div class="a asg">Pete de Zwart</div><div class="a fix">3.4</div></div>
  <div class="a row" style="top:547.0px"><div class="a key">KEY-123</div><div class="a loz">IN PROGRESS</div><div class="a lab">Label 1, Label 2</div><svg class="pri" width="7" height="7.900" viewBox="0 0 8 9" fill="none" stroke="#00875A" stroke-width="1.750" stroke-linecap="round" stroke-linejoin="round"><path d="M1 1.100l3 2.500 3-2.500M1 5.100l3 2.500 3-2.500"/></svg><div class="a med">Medium</div><svg class="av" width="12.400" height="12.400" viewBox="0 0 12.400 12.400"><circle cx="6.200" cy="6.200" r="5.450" fill="#fff" stroke="#C1C7D0" stroke-width="1.500"/><circle cx="6.200" cy="4.500" r="2.350" fill="#C1C7D0"/><path d="M1.900 10c.4-1.800 1.900-2.600 4.300-2.600s3.900.8 4.300 2.600c-1.100 1.100-2.600 1.700-4.300 1.700s-3.200-.6-4.300-1.700z" fill="#C1C7D0"/></svg><div class="a asg">Pete de Zwart</div><div class="a fix">3.4</div></div>
  <!-- cursor -->
  <svg style="left:700.400px;top:421.300px;z-index:9" width="13.400" height="15" viewBox="0 0 13.400 15"><path d="M4.300 8.400V1.800c0-1.300 1.900-1.300 1.900 0v3.700c.3-.8 1.700-.7 1.800.3.400-.7 1.700-.5 1.800.4.400-.6 1.700-.4 1.700.6v2.900c0 1.500-.4 2.400-.9 3.300l-.4.900H5.500c-.4-.8-1.200-1.800-2.200-2.800L1.300 9c-.8-.9.300-2 1.300-1.300z" fill="#fff" stroke="#222" stroke-width="1.150" stroke-linejoin="round"/><path d="M6.200 5.600v2.200M8 5.900v1.900M9.800 6.300v1.500" stroke="#222" stroke-width=".9" stroke-linecap="round"/></svg>
  <div class="a" style="left:364px;top:427px;width:1.500px;height:1.500px;background:#C8CCD4;border-radius:50%"></div>
</div>

</div>
</body>
</html>
